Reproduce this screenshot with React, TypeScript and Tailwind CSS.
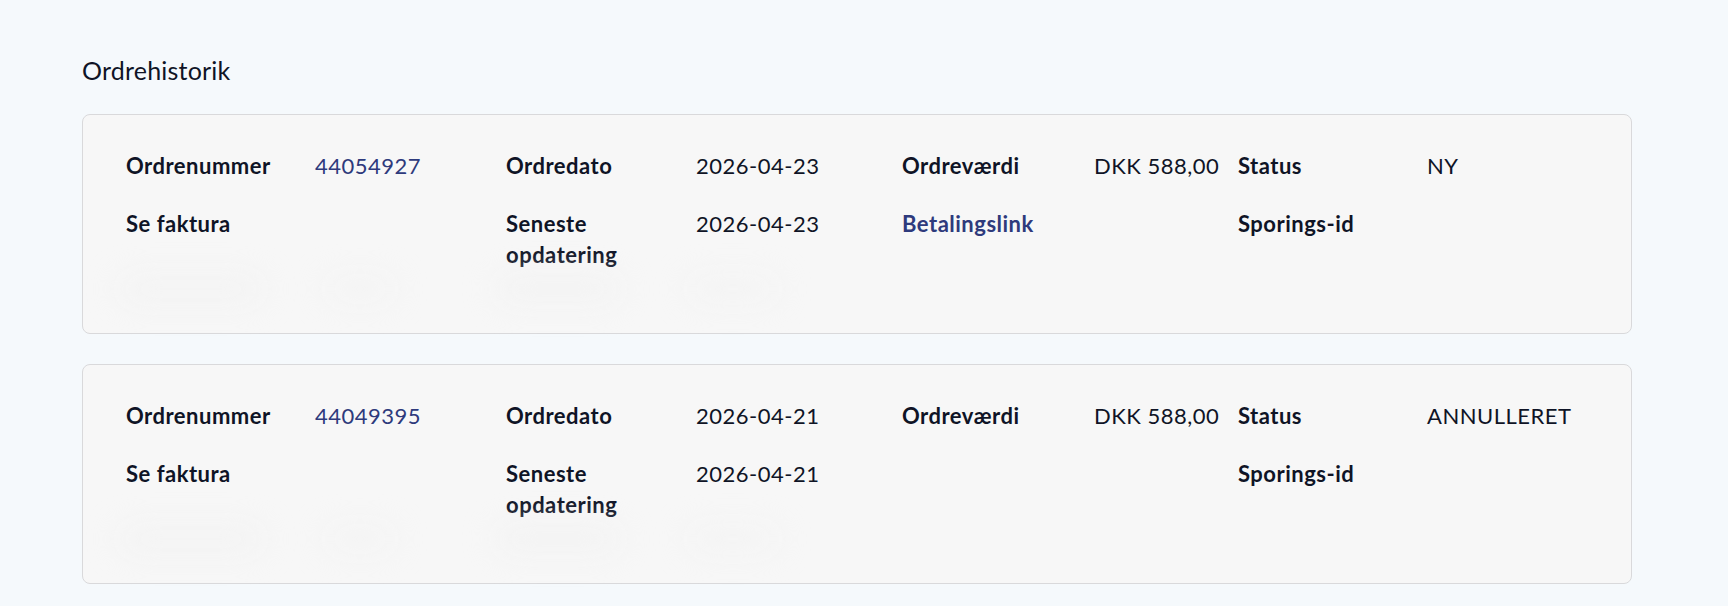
import React from "react";

type Order = {
  number: string;
  date: string;
  value: string;
  status: string;
  updated: string;
  paymentLink: boolean;
};

const orders: Order[] = [
  { number: "44054927", date: "2026-04-23", value: "DKK 588,00", status: "NY", updated: "2026-04-23", paymentLink: true },
  { number: "44049395", date: "2026-04-21", value: "DKK 588,00", status: "ANNULLERET", updated: "2026-04-21", paymentLink: false },
];

function Label({ children }: { children: React.ReactNode }) {
  return <div className="pr-4 font-bold text-[#0f1426]">{children}</div>;
}

function Value({ children }: { children?: React.ReactNode }) {
  return <div className="pr-2 text-[#0f1426]">{children}</div>;
}

function OrderCard({ order }: { order: Order }) {
  return (
    <div className="rounded-lg border border-[#d9d9db] bg-[#f7f7f7] pl-[43px] pr-6 pt-[35px] pb-[26px]">
      <div className="grid grid-cols-[189px_191px_190px_206px_192px_144px_189px_1fr] gap-y-[27px] text-[22px] leading-[31px] tracking-[0.5px]">
        <Label>Ordrenummer</Label>
        <Value>
          <a href="#" className="text-[#2e3a7c]">{order.number}</a>
        </Value>
        <Label>Ordredato</Label>
        <Value>{order.date}</Value>
        <Label>Ordreværdi</Label>
        <Value>{order.value}</Value>
        <Label>Status</Label>
        <Value>{order.status}</Value>

        <Label>Se faktura</Label>
        <Value />
        <Label>Seneste opdatering</Label>
        <Value>{order.updated}</Value>
        <div className="col-span-2">
          {order.paymentLink && (
            <a href="#" className="font-bold text-[#2e3a7c]">Betalingslink</a>
          )}
        </div>
        <Label>Sporings-id</Label>
        <Value />
      </div>

      {/* blurred hidden row */}
      <div className="mt-[1px] flex h-[36px] items-center -ml-[5px]">
        <div className="h-[16px] w-[140px] rounded-full bg-[#f1f1f1] blur-lg" />
        <div className="ml-[66px] h-[14px] w-[66px] rounded-full bg-[#f2f2f2] blur-lg" />
        <div className="ml-[104px] h-[18px] w-[122px] rounded-full bg-[#f1f1f1] blur-lg" />
        <div className="ml-[70px] h-[14px] w-[88px] rounded-full bg-[#f2f2f2] blur-lg" />
      </div>
    </div>
  );
}

export default function App() {
  return (
    <div
      className="min-h-screen bg-[#f5f9fc] pl-[82px] pr-[96px] pt-[53px]"
      style={{ fontFamily: "Lato, 'Noto Sans', sans-serif" }}
    >
      <h2 className="text-[25px] leading-[34px] tracking-[0.2px] text-[#0f1426]">Ordrehistorik</h2>
      <div className="mt-[27px] flex flex-col gap-[30px]">
        {orders.map((o) => (
          <OrderCard key={o.number} order={o} />
        ))}
      </div>
    </div>
  );
}
